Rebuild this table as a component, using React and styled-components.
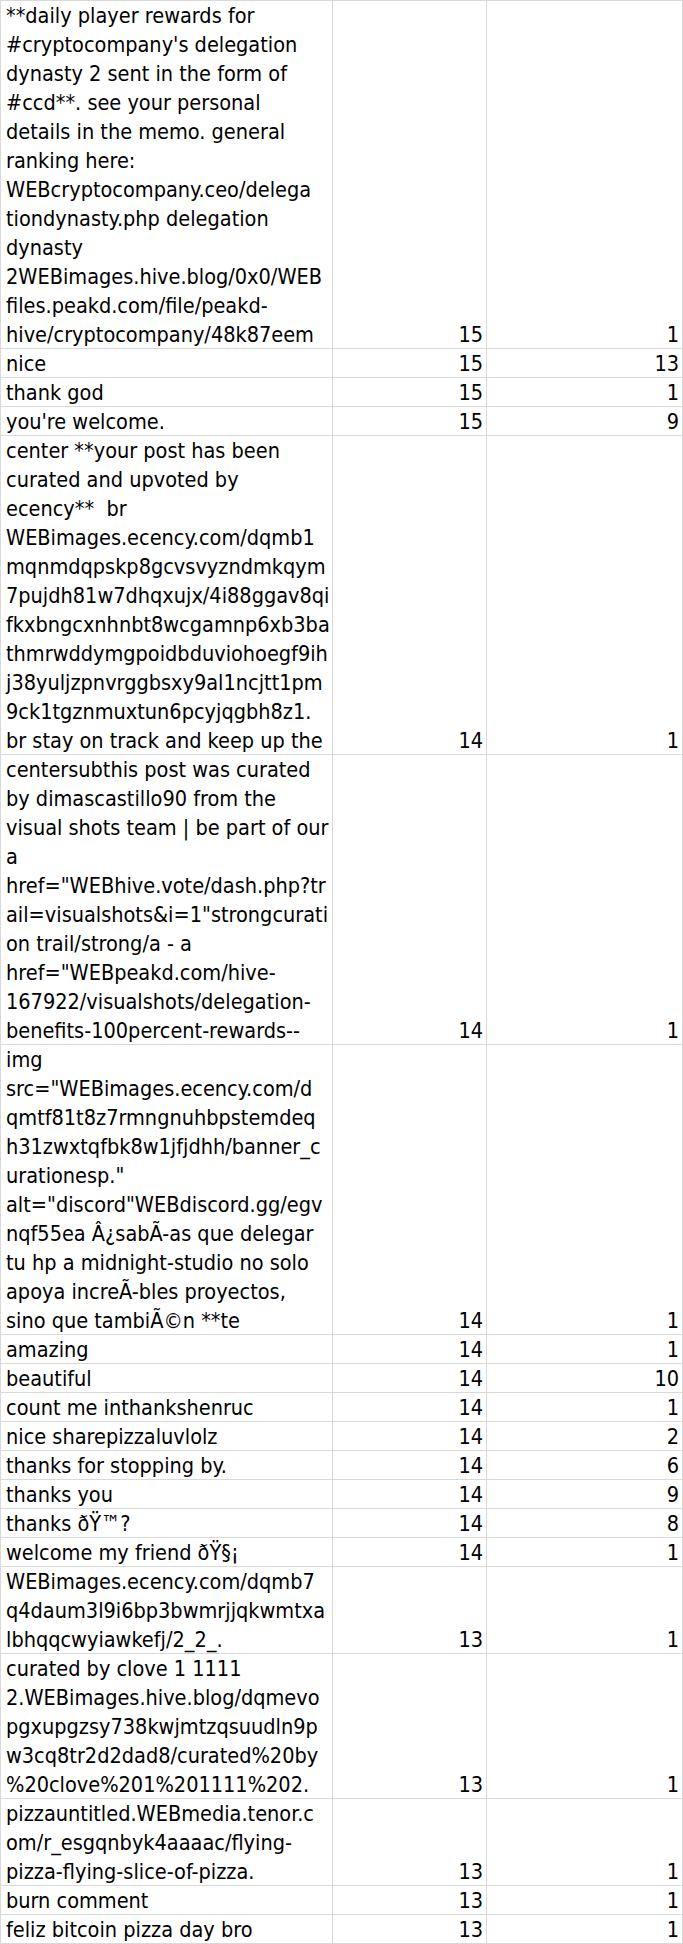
import React from "react";
import styled, { createGlobalStyle } from "styled-components";

const GlobalStyle = createGlobalStyle`
  html, body {
    margin: 0;
    padding: 0;
    background: #fff;
  }
`;

const rows = [
  {
    lines: [
      "**daily player rewards for",
      "#cryptocompany's delegation",
      "dynasty 2 sent in the form of",
      "#ccd**. see your personal",
      "details in the memo. general",
      "ranking here:",
      "WEBcryptocompany.ceo/delega",
      "tiondynasty.php delegation",
      "dynasty",
      "2WEBimages.hive.blog/0x0/WEB",
      "files.peakd.com/file/peakd-",
      "hive/cryptocompany/48k87eem",
    ],
    a: 15,
    b: 1,
  },
  { lines: ["nice"], a: 15, b: 13 },
  { lines: ["thank god"], a: 15, b: 1 },
  { lines: ["you're welcome."], a: 15, b: 9 },
  {
    lines: [
      "center **your post has been",
      "curated and upvoted by",
      "ecency**  br",
      "WEBimages.ecency.com/dqmb1",
      "mqnmdqpskp8gcvsvyzndmkqym",
      "7pujdh81w7dhqxujx/4i88ggav8qi",
      "fkxbngcxnhnbt8wcgamnp6xb3ba",
      "thmrwddymgpoidbduviohoegf9ih",
      "j38yuljzpnvrggbsxy9al1ncjtt1pm",
      "9ck1tgznmuxtun6pcyjqgbh8z1.",
      "br stay on track and keep up the",
    ],
    a: 14,
    b: 1,
  },
  {
    lines: [
      "centersubthis post was curated",
      "by dimascastillo90 from the",
      "visual shots team | be part of our",
      "a",
      "href=\"WEBhive.vote/dash.php?tr",
      "ail=visualshots&i=1\"strongcurati",
      "on trail/strong/a - a",
      "href=\"WEBpeakd.com/hive-",
      "167922/visualshots/delegation-",
      "benefits-100percent-rewards--",
    ],
    a: 14,
    b: 1,
  },
  {
    lines: [
      "img",
      "src=\"WEBimages.ecency.com/d",
      "qmtf81t8z7rmngnuhbpstemdeq",
      "h31zwxtqfbk8w1jfjdhh/banner_c",
      "urationesp.\"",
      "alt=\"discord\"WEBdiscord.gg/egv",
      "nqf55ea Â¿sabÃ-as que delegar",
      "tu hp a midnight-studio no solo",
      "apoya increÃ-bles proyectos,",
      "sino que tambiÃ©n **te",
    ],
    a: 14,
    b: 1,
  },
  { lines: ["amazing"], a: 14, b: 1 },
  { lines: ["beautiful"], a: 14, b: 10 },
  { lines: ["count me inthankshenruc"], a: 14, b: 1 },
  { lines: ["nice sharepizzaluvlolz"], a: 14, b: 2 },
  { lines: ["thanks for stopping by."], a: 14, b: 6 },
  { lines: ["thanks you"], a: 14, b: 9 },
  { lines: ["thanks ðŸ™?"], a: 14, b: 8 },
  { lines: ["welcome my friend ðŸ§¡"], a: 14, b: 1 },
  {
    lines: [
      "WEBimages.ecency.com/dqmb7",
      "q4daum3l9i6bp3bwmrjjqkwmtxa",
      "lbhqqcwyiawkefj/2_2_.",
    ],
    a: 13,
    b: 1,
  },
  {
    lines: [
      "curated by clove 1 1111",
      "2.WEBimages.hive.blog/dqmevo",
      "pgxupgzsy738kwjmtzqsuudln9p",
      "w3cq8tr2d2dad8/curated%20by",
      "%20clove%201%201111%202.",
    ],
    a: 13,
    b: 1,
  },
  {
    lines: [
      "pizzauntitled.WEBmedia.tenor.c",
      "om/r_esgqnbyk4aaaac/flying-",
      "pizza-flying-slice-of-pizza.",
    ],
    a: 13,
    b: 1,
  },
  { lines: ["burn comment"], a: 13, b: 1 },
  { lines: ["feliz bitcoin pizza day bro"], a: 13, b: 1 },
];

const LINE = 29;

const Sheet = styled.div`
  width: 683px;
  box-sizing: border-box;
  border-top: 1px solid #d9d9d9;
  border-left: 1px solid #d9d9d9;
  font-family: "Liberation Sans Narrow", "DejaVu Sans Condensed", "Roboto", sans-serif;
  font-stretch: condensed;
  font-size: 21.5px;
  color: #000;
`;

const Row = styled.div`
  display: grid;
  grid-template-columns: 332px 154px 196px;
  height: ${(p) => p.$lines * LINE}px;
`;

const Cell = styled.div`
  box-sizing: border-box;
  border-right: 1px solid #d9d9d9;
  border-bottom: 1px solid #d9d9d9;
  display: flex;
  flex-direction: column;
  justify-content: flex-end;
  overflow: hidden;
  white-space: pre;
  padding: ${(p) => (p.$num ? "0 3px 0 0" : "0 0 0 5px")};
  text-align: ${(p) => (p.$num ? "right" : "left")};
`;

const Line = styled.span`
  display: block;
  height: ${LINE}px;
  line-height: 32px;
  flex-shrink: 0;
`;

export default function App() {
  return (
    <>
      <GlobalStyle />
      <Sheet>
        {rows.map((r, i) => (
          <Row key={i} $lines={r.lines.length}>
            <Cell>
              {r.lines.map((l, j) => (
                <Line key={j}>{l}</Line>
              ))}
            </Cell>
            <Cell $num>
              <Line>{r.a}</Line>
            </Cell>
            <Cell $num>
              <Line>{r.b}</Line>
            </Cell>
          </Row>
        ))}
      </Sheet>
    </>
  );
}
